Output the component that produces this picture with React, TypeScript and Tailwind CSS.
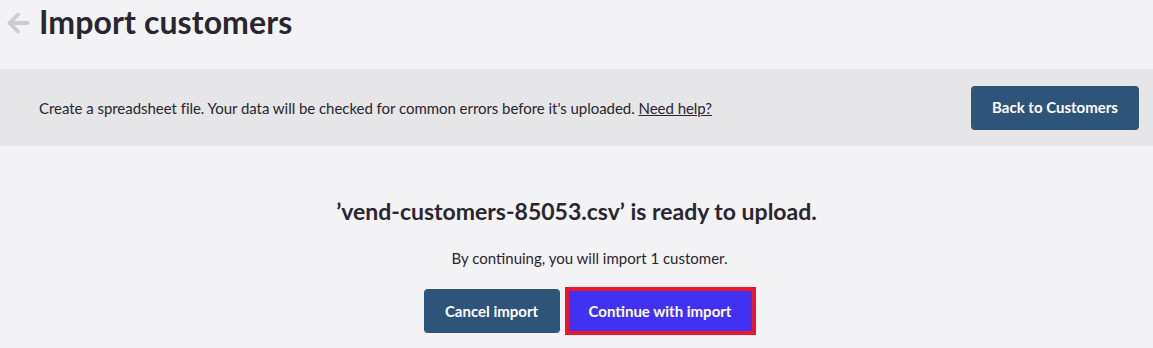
import React from "react";

const App: React.FC = () => {
  return (
    <div className="min-h-[348px] w-full bg-[#f3f2f5] text-[#29262f]" style={{ fontFamily: "Lato, 'Open Sans', sans-serif" }}>
      {/* header */}
      <div className="flex h-[69px] items-start pl-[7px] pt-[2px]">
        <svg width="23" height="24" viewBox="0 0 23 24" className="mt-[9px] mr-[9px]" fill="none" stroke="#cdcbd0" strokeWidth="3.8" strokeLinecap="round" strokeLinejoin="round">
          <path d="M20.5 12H3" />
          <path d="M11 3.5L2.5 12l8.5 8.5" />
        </svg>
        <h1 className="text-[32px] font-bold leading-[40px] tracking-[0.1px]">Import customers</h1>
      </div>

      {/* banner */}
      <div className="flex h-[77px] items-center justify-between bg-[#e6e5e8] pl-[39px] pr-[14px]">
        <p className="text-[15px] leading-5 tracking-[-0.04px]">
          Create a spreadsheet file. Your data will be checked for common errors before it's uploaded.{" "}
          <a href="#" className="underline">Need help?</a>
        </p>
        <button className="h-[44px] w-[168px] rounded-[4px] bg-[#2f5479] text-[15px] font-bold text-white">
          Back to Customers
        </button>
      </div>

      {/* body */}
      <div className="flex flex-col items-center pt-[49px]">
        <h2 className="text-[23px] font-bold leading-[32px]">’vend-customers-85053.csv’ is ready to upload.</h2>
        <p className="mt-[21px] pl-[26px] text-[15px] leading-5">By continuing, you will import 1 customer.</p>
        <div className="mt-[19px] flex items-center gap-[5px] pl-[26px]">
          <button className="h-[44px] w-[136px] rounded-[4px] bg-[#2f5479] text-[15px] font-bold text-white">
            Cancel import
          </button>
          <button className="h-[48px] w-[191px] border-[4px] border-[#e8192c] bg-[#4131f2] text-[15px] font-bold text-white">
            Continue with import
          </button>
        </div>
      </div>
    </div>
  );
};

export default App;
